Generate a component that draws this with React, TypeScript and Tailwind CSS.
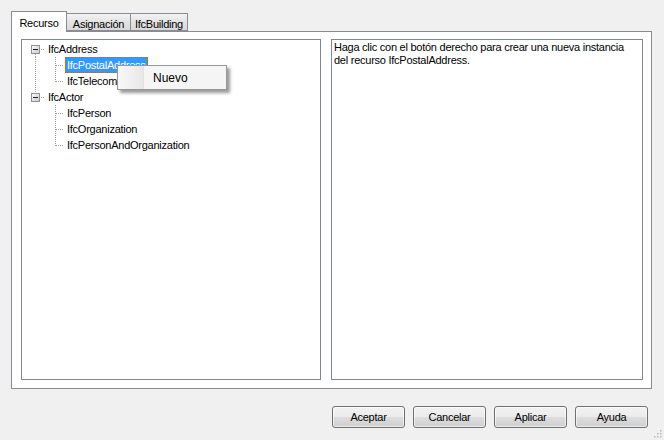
import React from "react";

type Row = {
  label: string;
  level: 0 | 1;
  kind: "first" | "last" | "mid" | "end";
  guide?: boolean;
  selected?: boolean;
};

const rows: Row[] = [
  { label: "IfcAddress", level: 0, kind: "first" },
  { label: "IfcPostalAddress", level: 1, kind: "mid", guide: true, selected: true },
  { label: "IfcTelecomAddress", level: 1, kind: "end", guide: true },
  { label: "IfcActor", level: 0, kind: "last" },
  { label: "IfcPerson", level: 1, kind: "mid" },
  { label: "IfcOrganization", level: 1, kind: "mid" },
  { label: "IfcPersonAndOrganization", level: 1, kind: "end" },
];

const DOT = "#a0a0a0";

const VLine = ({ y1, y2 }: { y1: number; y2: number }) => (
  <line x1={10.5} y1={y1} x2={10.5} y2={y2} stroke={DOT} strokeDasharray="1 1" shapeRendering="crispEdges" />
);

const HLine = ({ x1, x2 }: { x1: number; x2: number }) => (
  <line x1={x1} y1={8.5} x2={x2} y2={8.5} stroke={DOT} strokeDasharray="1 1" shapeRendering="crispEdges" />
);

const Expander = ({ kind }: { kind: Row["kind"] }) => (
  <svg width="20" height="16" className="shrink-0">
    <defs>
      <linearGradient id="exp" x1="0" y1="0" x2="1" y2="1">
        <stop offset="0" stopColor="#ffffff" />
        <stop offset="1" stopColor="#c6c6c6" />
      </linearGradient>
    </defs>
    {kind === "first" && <VLine y1={13} y2={16} />}
    {kind === "last" && <VLine y1={0} y2={4} />}
    <HLine x1={16} x2={20} />
    <rect x={6.5} y={4.5} width={8} height={8} fill="url(#exp)" stroke="#919191" shapeRendering="crispEdges" />
    <line x1={8} y1={8.5} x2={13} y2={8.5} stroke="#1b1b3a" shapeRendering="crispEdges" />
  </svg>
);

const Guide = ({ show }: { show?: boolean }) => (
  <svg width="20" height="16" className="shrink-0">
    {show && <VLine y1={0} y2={16} />}
  </svg>
);

const Connector = ({ kind }: { kind: Row["kind"] }) => (
  <svg width="19" height="16" className="shrink-0">
    <VLine y1={0} y2={kind === "end" ? 9 : 16} />
    <HLine x1={11} x2={19} />
  </svg>
);

const TreeRow = ({ row }: { row: Row }) => (
  <div className="flex h-[16px] items-center">
    {row.level === 0 ? (
      <Expander kind={row.kind} />
    ) : (
      <>
        <Guide show={row.guide} />
        <Connector kind={row.kind} />
      </>
    )}
    <span
      className={
        row.selected
          ? "ml-[1px] h-[16px] border border-dotted border-[#cc6600] bg-[#3399ff] px-[1px] leading-[14px] text-white"
          : "ml-[1px] h-[16px] border border-transparent px-[1px] leading-[14px]"
      }
    >
      {row.label}
    </span>
  </div>
);

const Tab = ({ label, active, w }: { label: string; active?: boolean; w: string }) => (
  <div
    className={
      active
        ? `${w} h-[21px] border border-b-0 border-[#898c95] bg-white pt-[3px] text-center relative z-10`
        : `${w} h-[18px] mb-[1px] border border-[#898c95] bg-[linear-gradient(#f3f3f3,#e3e3e3_50%,#d9d9d9)] pt-[2px] text-center -ml-px`
    }
  >
    {label}
  </div>
);

const Button = ({ label }: { label: string }) => (
  <button className="h-[22px] w-[73px] rounded-[3px] border border-[#707070] bg-[linear-gradient(#f2f2f2_0%,#ebebeb_50%,#dddddd_51%,#cfcfcf_100%)] text-[11px] leading-[18px] shadow-[inset_0_0_0_1px_rgba(255,255,255,0.6)]">
    {label}
  </button>
);

export default function App() {
  return (
    <div className="relative flex h-[440px] w-[664px] flex-col overflow-hidden bg-[#f0f0f0] font-['Liberation_Sans',Arial,sans-serif] text-[11px] tracking-[-0.25px] text-black">
      <div className="ml-[11px] mt-[11px] flex items-end -mb-px">
        <Tab label="Recurso" active w="w-[56px]" />
        <Tab label="Asignación" w="w-[65px]" />
        <Tab label="IfcBuilding" w="w-[58px]" />
      </div>

      <div className="ml-[11px] flex h-[358px] w-[641px] gap-[10px] border border-[#898c95] bg-white pb-[8px] pl-[9px] pr-[8px] pt-[7px]">
        <div className="w-[300px] border border-[#828790] bg-white pl-[3px] pt-[1px]">
          {rows.map((r) => (
            <TreeRow key={r.label} row={r} />
          ))}
        </div>
        <div className="w-[312px] border border-[#828790] bg-white pl-[2px] pr-[2px] pt-[1px] leading-[13px]">
          Haga clic con el botón derecho para crear una nueva instancia del recurso IfcPostalAddress.
        </div>
      </div>

      <div className="mr-[16px] mt-[17px] flex justify-end gap-[8px]">
        <Button label="Aceptar" />
        <Button label="Cancelar" />
        <Button label="Aplicar" />
        <Button label="Ayuda" />
      </div>

      <div className="absolute left-[117px] top-[65px] flex h-[25px] w-[110px] items-center border border-[#979797] bg-[#f5f5f5] shadow-[3px_3px_3px_rgba(0,0,0,0.4)]">
        <div className="h-full w-[26px] bg-[linear-gradient(90deg,#f8f8f8,#e8e8e8)] border-r border-[#e2e3e3]" />
        <span className="ml-[9px] text-[12px] tracking-normal text-black">Nuevo</span>
      </div>

      <svg className="absolute bottom-[2px] right-[2px]" width="10" height="10">
        {[
          [8, 2],
          [5, 5],
          [8, 5],
          [2, 8],
          [5, 8],
          [8, 8],
        ].map(([x, y]) => (
          <rect key={`${x}-${y}`} x={x} y={y} width="1.5" height="1.5" fill="#b8b8b8" />
        ))}
      </svg>
    </div>
  );
}
